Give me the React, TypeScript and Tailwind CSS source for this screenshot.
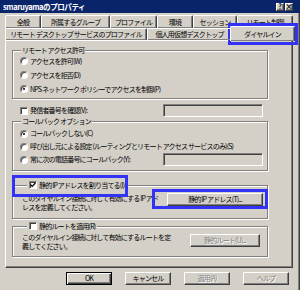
import React from 'react';

const Radio = ({ on }: { on?: boolean }) => (
  <span className="w-[8px] h-[8px] shrink-0 rounded-full bg-white border border-[#808080] border-r-white border-b-white shadow-[inset_1px_1px_0_#404040] flex items-center justify-center">
    {on && <span className="w-[2px] h-[2px] rounded-full bg-black" />}
  </span>
);

const Check = ({ on }: { on?: boolean }) => (
  <span className="w-[8px] h-[8px] shrink-0 bg-white border border-[#808080] border-r-white border-b-white shadow-[inset_1px_1px_0_#404040] flex items-center justify-center">
    {on && (
      <svg width="6" height="6" viewBox="0 0 6 6">
        <path d="M0.6 2.6 L2.2 4.4 L5.4 1" stroke="#000" strokeWidth="1.3" fill="none" />
      </svg>
    )}
  </span>
);

const TextBox = () => (
  <span className="ml-auto w-[100px] h-[13px] shrink-0 border border-[#808080] border-r-white border-b-white shadow-[inset_1px_1px_0_#404040]" />
);

const raised = 'border border-white border-r-[#404040] border-b-[#404040] shadow-[inset_-1px_-1px_0_#808080]';
const off = 'text-[#808080] [text-shadow:1px_1px_0_#fff]';
const etched = 'border border-[#808080] shadow-[inset_1px_1px_0_#fff,1px_1px_0_#fff]';

export default function App() {
  return (
    <div className="relative w-[300px] h-[290px] overflow-hidden bg-[#d4d0c8] text-black text-[7px] leading-none tracking-[-0.8px] font-['Noto_Sans_CJK_JP',sans-serif] shadow-[inset_-1px_0_0_#404040,inset_-2px_0_0_#808080]">
      {/* title bar */}
      <div className="h-[13px] bg-[#0a246a] flex items-center pl-[3px] pr-[7px]">
        <span className="text-white font-bold text-[7.5px] tracking-[-0.4px]">smaruyamaのプロパティ</span>
        <div className="ml-auto flex gap-[1px]">
          <span className={`w-[8px] h-[8px] bg-[#d4d0c8] ${raised} flex items-center justify-center text-[7px] font-bold tracking-normal`}>?</span>
          <span className={`w-[8px] h-[8px] bg-[#d4d0c8] ${raised} flex items-center justify-center text-[8px] font-bold tracking-normal`}>×</span>
        </div>
      </div>

      <div className="pl-[5px] pr-[7px] pt-[2px]">
        {/* tab rows */}
        <div className="flex h-[13px]">
          <div className={`w-[36px] shrink-0 ${raised} border-b-0 rounded-t-[2px] flex items-center justify-center pt-[1px]`}>全般</div>
          <div className={`w-[69px] shrink-0 ${raised} border-b-0 rounded-t-[2px] flex items-center justify-center pt-[1px]`}>所属するグループ</div>
          <div className={`w-[47px] shrink-0 ${raised} border-b-0 rounded-t-[2px] flex items-center justify-center pt-[1px]`}>プロファイル</div>
          <div className={`w-[36px] shrink-0 ${raised} border-b-0 rounded-t-[2px] flex items-center justify-center pt-[1px]`}>環境</div>
          <div className={`w-[44px] shrink-0 ${raised} border-b-0 rounded-t-[2px] flex items-center justify-center pt-[1px]`}>セッション</div>
          <div className={`w-[56px] shrink-0 ${raised} border-b-0 rounded-t-[2px] flex items-center justify-center pt-[1px]`}>リモート制御</div>
        </div>
        <div className="relative z-10 flex items-end h-[12px]">
          <div className={`w-[142px] h-[12px] shrink-0 ${raised} border-b-0 rounded-t-[2px] flex items-center justify-center`}>リモート デスクトップ サービスのプロファイル</div>
          <div className={`w-[85px] h-[12px] shrink-0 ${raised} border-b-0 rounded-t-[2px] flex items-center justify-center`}>個人用仮想デスクトップ</div>
          <div className={`w-[65px] h-[15px] -ml-[2px] -mb-[1px] shrink-0 bg-[#d4d0c8] ${raised} border-b-0 rounded-t-[2px] flex items-center justify-center`}>ダイヤルイン</div>
        </div>

        {/* tab panel */}
        <div className={`h-[228px] ${raised} pl-[6px] flex flex-col`}>
          <fieldset className={`mt-[5px] w-[256px] ${etched} pl-[7px] pb-[2px]`}>
            <legend className="ml-[1px] px-[1px] h-[8px] leading-[8px] bg-[#d4d0c8]">リモート アクセス許可</legend>
            <div className="flex items-center gap-[2px] h-[14px]"><Radio />アクセスを許可(W)</div>
            <div className="flex items-center gap-[2px] h-[14px]"><Radio />アクセスを拒否(D)</div>
            <div className="flex items-center gap-[2px] h-[14px]"><Radio on />NPS ネットワーク ポリシーでアクセスを制御(P)</div>
          </fieldset>

          <div className="mt-[5px] w-[251px] h-[13px] flex items-center gap-[2px] pl-[8px]">
            <Check />発信者番号を確認(V):
            <TextBox />
          </div>

          <fieldset className={`w-[256px] ${etched} pl-[7px] pr-[4px] pt-[2px] pb-[4px]`}>
            <legend className="ml-[1px] px-[1px] h-[8px] leading-[8px] bg-[#d4d0c8]">コールバック オプション</legend>
            <div className="flex items-center gap-[2px] h-[13px]"><Radio on />コールバックしない(C)</div>
            <div className="flex items-center gap-[2px] h-[13px]"><Radio />呼び出し元による設定 (ルーティングとリモート アクセス サービスのみ)(S)</div>
            <div className="flex items-center gap-[2px] h-[13px]"><Radio />常に次の電話番号にコールバック(Y):<TextBox /></div>
          </fieldset>

          <fieldset className={`mt-[9px] w-[256px] ${etched} pl-[9px] pr-[4px] pt-[3px] pb-[6px]`}>
            <legend className="ml-[5px] px-[2px] h-[10px] bg-[#d4d0c8] flex items-center gap-[2px]"><Check on />静的 IP アドレスを割り当てる(I)</legend>
            <div className="flex items-start">
              <div className="mt-[1px] leading-[9px] whitespace-nowrap">このダイヤルイン接続に対して有効にする IP アド<br />レスを定義してください。</div>
              <div className={`ml-auto w-[96px] h-[13px] shrink-0 ${raised} flex items-center justify-center`}>静的 IP アドレス(T)...</div>
            </div>
          </fieldset>

          <fieldset className={`mt-[2px] w-[256px] ${etched} pl-[9px] pr-[7px] pt-[2px] pb-[5px]`}>
            <legend className="ml-[5px] px-[2px] h-[10px] bg-[#d4d0c8] flex items-center gap-[2px]"><Check />静的ルートを適用(R)</legend>
            <div className="flex items-start">
              <div className="leading-[9px] whitespace-nowrap">このダイヤルイン接続に対して有効にするルートを定<br />義してください。</div>
              <div className={`ml-auto mt-[1px] w-[70px] h-[13px] shrink-0 ${raised} ${off} flex items-center justify-center`}>静的ルート(U)...</div>
            </div>
          </fieldset>
        </div>
      </div>

      {/* dialog buttons */}
      <div className="mt-[4px] pl-[66px] flex gap-[13px]">
        <div className="w-[46px] h-[13px] border border-black shadow-[inset_1px_1px_0_#fff,inset_-1px_-1px_0_#404040,inset_-2px_-2px_0_#808080] flex items-center justify-center">OK</div>
        <div className={`w-[46px] h-[13px] ${raised} flex items-center justify-center`}>キャンセル</div>
        <div className={`w-[46px] h-[13px] ${raised} ${off} flex items-center justify-center`}>適用(A)</div>
        <div className={`w-[46px] h-[13px] ${raised} ${off} flex items-center justify-center`}>ヘルプ</div>
      </div>

      {/* blue annotation boxes */}
      <div className="absolute left-[228px] top-[23px] w-[70px] h-[22px] border-[3px] border-[#3333f5]" />
      <div className="absolute left-[12px] top-[175px] w-[116px] h-[22px] border-[3px] border-[#3333f5]" />
      <div className="absolute left-[152px] top-[189px] w-[116px] h-[20px] border-[3px] border-[#3333f5]" />
    </div>
  );
}
